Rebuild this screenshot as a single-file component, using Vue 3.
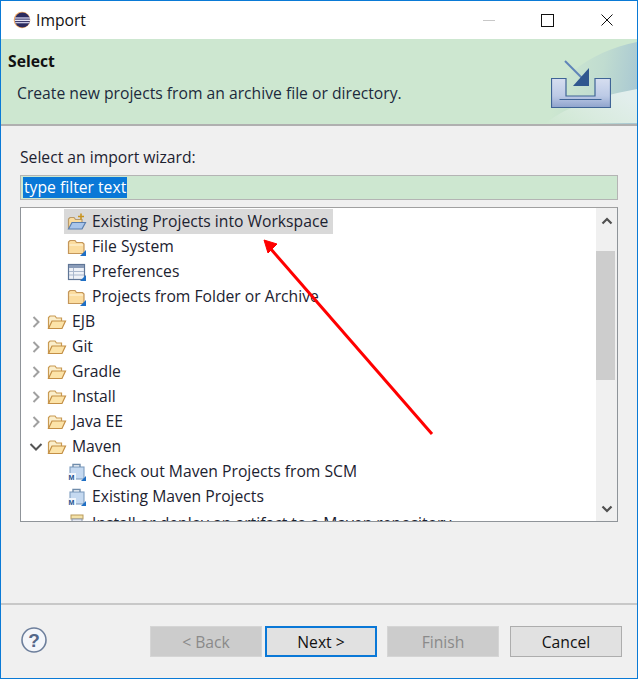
<script setup>
const rows = [
  { label: 'Existing Projects into Workspace', icon: 'import', level: 1, selected: true },
  { label: 'File System', icon: 'file', level: 1 },
  { label: 'Preferences', icon: 'prefs', level: 1 },
  { label: 'Projects from Folder or Archive', icon: 'file', level: 1 },
  { label: 'EJB', icon: 'open', level: 0, twisty: 'closed' },
  { label: 'Git', icon: 'open', level: 0, twisty: 'closed' },
  { label: 'Gradle', icon: 'open', level: 0, twisty: 'closed' },
  { label: 'Install', icon: 'open', level: 0, twisty: 'closed' },
  { label: 'Java EE', icon: 'open', level: 0, twisty: 'closed' },
  { label: 'Maven', icon: 'open', level: 0, twisty: 'expanded' },
  { label: 'Check out Maven Projects from SCM', icon: 'maven', level: 1 },
  { label: 'Existing Maven Projects', icon: 'maven', level: 1 },
  { label: 'Install or deploy an artifact to a Maven repository', icon: 'jar', level: 1, clipped: true }
]
</script>

<template>
  <div class="window">
    <header class="titlebar">
      <svg class="app-icon" width="18" height="18" viewBox="0 0 18 18">
        <circle cx="9" cy="9" r="8.3" fill="#f0a860" />
        <circle cx="9.4" cy="9" r="7.6" fill="#2c2a5e" />
        <rect x="2" y="6.3" width="15" height="1.4" fill="#c8c6e2" />
        <rect x="1.8" y="8.6" width="15.4" height="1.4" fill="#e6e4f4" />
        <rect x="2.2" y="10.9" width="14.6" height="1.4" fill="#c8c6e2" />
      </svg>
      <span class="title">Import</span>
      <div class="controls">
        <span class="ctl"><i class="min"></i></span>
        <span class="ctl"><i class="max"></i></span>
        <span class="ctl">
          <svg width="12" height="12" viewBox="0 0 12 12"><path d="M0.5 0.5 11.5 11.5M11.5 0.5 0.5 11.5" stroke="#111" stroke-width="1" fill="none" /></svg>
        </span>
      </div>
    </header>

    <section class="banner">
      <svg class="banner-art" width="110" height="85" viewBox="0 0 110 85">
        <defs>
          <linearGradient id="sweep" x1="0.2" y1="0.5" x2="1" y2="0.6">
            <stop offset="0" stop-color="#cde7d0" />
            <stop offset="0.55" stop-color="#c0dcd0" />
            <stop offset="1" stop-color="#a9c8d2" />
          </linearGradient>
          <linearGradient id="streak" x1="0" y1="1" x2="1" y2="0.4">
            <stop offset="0" stop-color="#cde7d0" />
            <stop offset="0.5" stop-color="#d9ebdf" />
            <stop offset="1" stop-color="#e2eeec" />
          </linearGradient>
        </defs>
        <path d="M8 85C22 44 62 12 110 3V85Z" fill="url(#sweep)" />
        <path d="M18 85C40 66 78 56 110 50V84H18Z" fill="url(#streak)" />
      </svg>
      <div class="banner-text">
        <h1>Select</h1>
        <p>Create new projects from an archive file or directory.</p>
      </div>
      <svg class="banner-icon" width="60" height="48" viewBox="0 0 60 48">
        <defs>
          <linearGradient id="tray" x1="0" y1="0" x2="0" y2="1">
            <stop offset="0" stop-color="#d6def0" />
            <stop offset="0.6" stop-color="#bccae6" />
            <stop offset="1" stop-color="#8fa3cc" />
          </linearGradient>
        </defs>
        <path d="M0.5 18.5H15V36H44V18.5H59.5V47.5H0.5Z" fill="url(#tray)" stroke="#3f6496" stroke-width="1.2" />
        <path d="M8.5 39.5H50.5" stroke="#3f6496" stroke-width="1.2" />
        <path d="M14 1 33 20" stroke="#5f84b8" stroke-width="2" />
        <path d="M38 8V26H22Z" fill="#30578f" />
      </svg>
    </section>

    <main class="body">
      <label class="wizard-label">Select an import wizard:</label>
      <div class="filter"><span class="filter-sel">type filter text</span></div>

      <div class="tree">
        <ul class="tree-list">
          <li v-for="row in rows" :key="row.label" class="row" :class="['lvl' + row.level, { clipped: row.clipped }]">
            <span v-if="row.level === 0" class="twisty">
              <svg v-if="row.twisty === 'closed'" width="10" height="14" viewBox="0 0 10 14"><path d="M2.5 2 7.5 7 2.5 12" fill="none" stroke="#a0a0a0" stroke-width="2" /></svg>
              <svg v-else width="14" height="10" viewBox="0 0 14 10"><path d="M1.5 2 7 7.5 12.5 2" fill="none" stroke="#555" stroke-width="2" /></svg>
            </span>
            <span class="cell" :class="{ selected: row.selected }">
              <svg class="icon" width="20" height="20" viewBox="0 0 20 20">
                <template v-if="row.icon === 'open'">
                  <path d="M1.5 16.5V5.5L3 4H8L9.5 6H14.5V9" fill="#fbeecb" stroke="#c99a52" stroke-width="1.2" />
                  <path d="M1.5 16.5 5 9H18.5L15 16.5Z" fill="#fce3a8" stroke="#c48f45" stroke-width="1.2" />
                </template>
                <template v-else-if="row.icon === 'file'">
                  <path d="M1.5 16.5V5L3 3.5H8L9.5 5.5H15.5L17 7V16.5Z" fill="#fbdc9f" stroke="#c4965a" stroke-width="1.2" />
                  <path d="M2.5 8H16" stroke="#fff3d8" stroke-width="1.2" />
                  <path d="M19 13V19H13Z" fill="#1f6fc4" />
                </template>
                <template v-else-if="row.icon === 'import'">
                  <path d="M1.5 16.5V7L3 5.5H7L8.5 7.5H15V16.5Z" fill="#fbdc9f" stroke="#b99a6a" stroke-width="1.2" />
                  <path d="M1.5 17 5 10.5H18.5L15 17Z" fill="#a9c5ea" stroke="#5b7fae" stroke-width="1.2" />
                  <path d="M14 1.5V7.5M11 4.5H17" stroke="#c8931f" stroke-width="1.6" />
                </template>
                <template v-else-if="row.icon === 'prefs'">
                  <rect x="1.5" y="2.5" width="16" height="15" fill="#eef1f7" stroke="#5f7596" stroke-width="1.2" />
                  <rect x="2" y="3" width="15" height="3" fill="#8a9cb9" />
                  <path d="M2 9.5H17M2 13H17M6.5 6V17" stroke="#a9b7cd" stroke-width="1" />
                  <path d="M19 13V19H13Z" fill="#1f6fc4" />
                </template>
                <template v-else-if="row.icon === 'maven'">
                  <rect x="3" y="5" width="14" height="12" fill="#c5d9f0" stroke="#7f9dc0" stroke-width="1.1" />
                  <path d="M6 5V2.5H13V5" fill="none" stroke="#6f8cab" stroke-width="1.4" />
                  <rect x="1" y="11" width="8" height="7" fill="#f2f6fb" />
                  <text x="1.5" y="17.5" class="m-badge">M</text>
                  <path d="M19 14V19H14Z" fill="#1f6fc4" />
                </template>
                <template v-else>
                  <rect x="4" y="3" width="12" height="4" fill="#f4e2a8" stroke="#b99a5a" />
                  <rect x="5" y="7" width="10" height="10" fill="#e6e9f2" stroke="#8c99ae" />
                </template>
              </svg>
              <span class="label">{{ row.label }}</span>
            </span>
          </li>
        </ul>
        <div class="scrollbar">
          <span class="sb-btn">
            <svg width="12" height="8" viewBox="0 0 12 8"><path d="M1.5 6.5 6 2 10.5 6.5" fill="none" stroke="#505050" stroke-width="2.2" /></svg>
          </span>
          <div class="sb-track"><div class="sb-thumb"></div></div>
          <span class="sb-btn">
            <svg width="12" height="8" viewBox="0 0 12 8"><path d="M1.5 1.5 6 6 10.5 1.5" fill="none" stroke="#505050" stroke-width="2.2" /></svg>
          </span>
        </div>
      </div>
    </main>

    <footer class="footer">
      <svg class="help" width="28" height="28" viewBox="0 0 28 28">
        <circle cx="14" cy="14" r="12" fill="#f4f6fa" stroke="#6d7f9c" stroke-width="1.6" />
        <text x="14" y="20.5" text-anchor="middle" class="help-mark">?</text>
      </svg>
      <div class="buttons">
        <button class="btn disabled">&lt; Back</button>
        <button class="btn primary">Next &gt;</button>
        <button class="btn disabled finish">Finish</button>
        <button class="btn cancel">Cancel</button>
      </div>
    </footer>

    <svg class="annotation" width="180" height="200" viewBox="0 0 180 200">
      <path d="M169 195 7 9" stroke="#f00" stroke-width="3" fill="none" />
      <path d="M1 1 14 5 5 14Z" fill="#f00" stroke="#f00" stroke-width="1" />
    </svg>
  </div>
</template>

<style scoped>
.window {
  position: relative;
  box-sizing: border-box;
  width: 638px;
  height: 679px;
  border: 1px solid #0a7ad6;
  background: #f0f0f0;
  display: flex;
  flex-direction: column;
  overflow: hidden;
  font-family: "Open Sans", "Noto Sans", sans-serif;
  font-size: 15.7px;
  color: #1c2230;
}
.titlebar {
  height: 38px;
  flex: none;
  background: #fff;
  display: flex;
  align-items: center;
  padding-left: 12px;
}
.app-icon { margin-right: 5px; }
.title { font-size: 15.7px; color: #111; }
.controls { margin-left: auto; margin-right: 1px; display: flex; align-items: center; }
.ctl { width: 59px; display: flex; justify-content: center; align-items: center; height: 38px; }
.min { display: block; width: 12px; height: 1px; background: #c8c8c8; }
.max { display: block; width: 11px; height: 11px; border: 1px solid #111; }
.banner {
  position: relative;
  height: 85px;
  flex: none;
  border-bottom: 2px solid #b0b0b0;
  background: #cde7d0;
  padding-left: 7px;
  box-sizing: content-box;
}
.banner-art { position: absolute; right: 0; top: 0; }
.banner-text { position: relative; }
.banner-text h1 { margin: 12px 0 0; font-size: 15.7px; font-weight: 700; color: #111; line-height: 20px; }
.banner-text p { margin: 12px 0 0 9px; line-height: 20px; color: #1c2a3c; }
.banner-icon { position: absolute; right: 26px; top: 21px; }
.body {
  flex: 1;
  display: flex;
  flex-direction: column;
  padding: 21px 19px 0 19px;
  min-height: 0;
}
.wizard-label { line-height: 20px; height: 20px; }
.filter {
  margin-top: 8px;
  height: 25px;
  box-sizing: border-box;
  width: 598px;
  border: 1px solid #b4b4b4;
  padding: 1px 2px;
  background: #cde7d0;
  display: flex;
}
.filter-sel { background: #0a78d7; color: #fff; line-height: 21px; padding: 0 1px; }
.tree {
  margin-top: 7px;
  width: 598px;
  height: 315px;
  box-sizing: border-box;
  border: 1px solid #8f9499;
  border-top-color: #a0a0a0;
  background: #fff;
  display: flex;
  overflow: hidden;
}
.tree-list {
  list-style: none;
  margin: 0;
  padding: 1px 0 0;
  flex: 1;
  min-width: 0;
  overflow: hidden;
}
.row { height: 25px; display: flex; align-items: center; white-space: nowrap; }
.lvl0 { padding-left: 4px; }
.lvl1 { padding-left: 43px; }
.twisty { width: 22px; display: flex; justify-content: center; align-items: center; flex: none; }
.cell { display: inline-flex; align-items: center; height: 25px; padding-left: 3px; padding-right: 5px; }
.lvl0 .cell { padding-left: 0; }
.selected { background: #d9d9d9; }
.icon { flex: none; margin-right: 5px; }
.label { margin-bottom: 2px; }
.clipped .label { margin-bottom: 0; margin-top: 3px; }
.m-badge { font-family: "Liberation Sans", sans-serif; font-size: 7px; font-weight: 700; fill: #1d4f8e; }
.scrollbar {
  width: 21px;
  flex: none;
  background: #f0f0f0;
  display: flex;
  flex-direction: column;
}
.sb-btn { height: 25px; flex: none; display: flex; align-items: center; justify-content: center; }
.sb-track { flex: 1; padding: 18px 0 0; }
.sb-thumb { height: 129px; background: #cdcdcd; margin-right: 2px; }
.footer {
  height: 73px;
  flex: none;
  border-top: 2px solid #c8c8c8;
  position: relative;
  box-sizing: content-box;
  display: flex;
  padding-left: 19px;
  align-items: flex-start;
}
.help { margin-top: 21px; }
.help-mark { font-family: "Liberation Sans", sans-serif; font-size: 19px; font-weight: 700; fill: #55688a; }
.buttons { margin-left: 102px; margin-top: 21px; display: flex; }
.btn {
  width: 112px;
  height: 31px;
  box-sizing: border-box;
  font: inherit;
  color: #111;
  border: 1px solid #adadad;
  background: #e1e1e1;
  padding: 0;
}
.disabled { background: #cccccc; border-color: #d5d5d5; color: #8a8a8a; }
.primary { border: 2px solid #0a78d7; margin-left: 3px; }
.finish { margin-left: 10px; }
.cancel { margin-left: 11px; }
.annotation { position: absolute; left: 262px; top: 238px; pointer-events: none; }
</style>

<style>
html, body { margin: 0; padding: 0; background: #f0f0f0; }
</style>
